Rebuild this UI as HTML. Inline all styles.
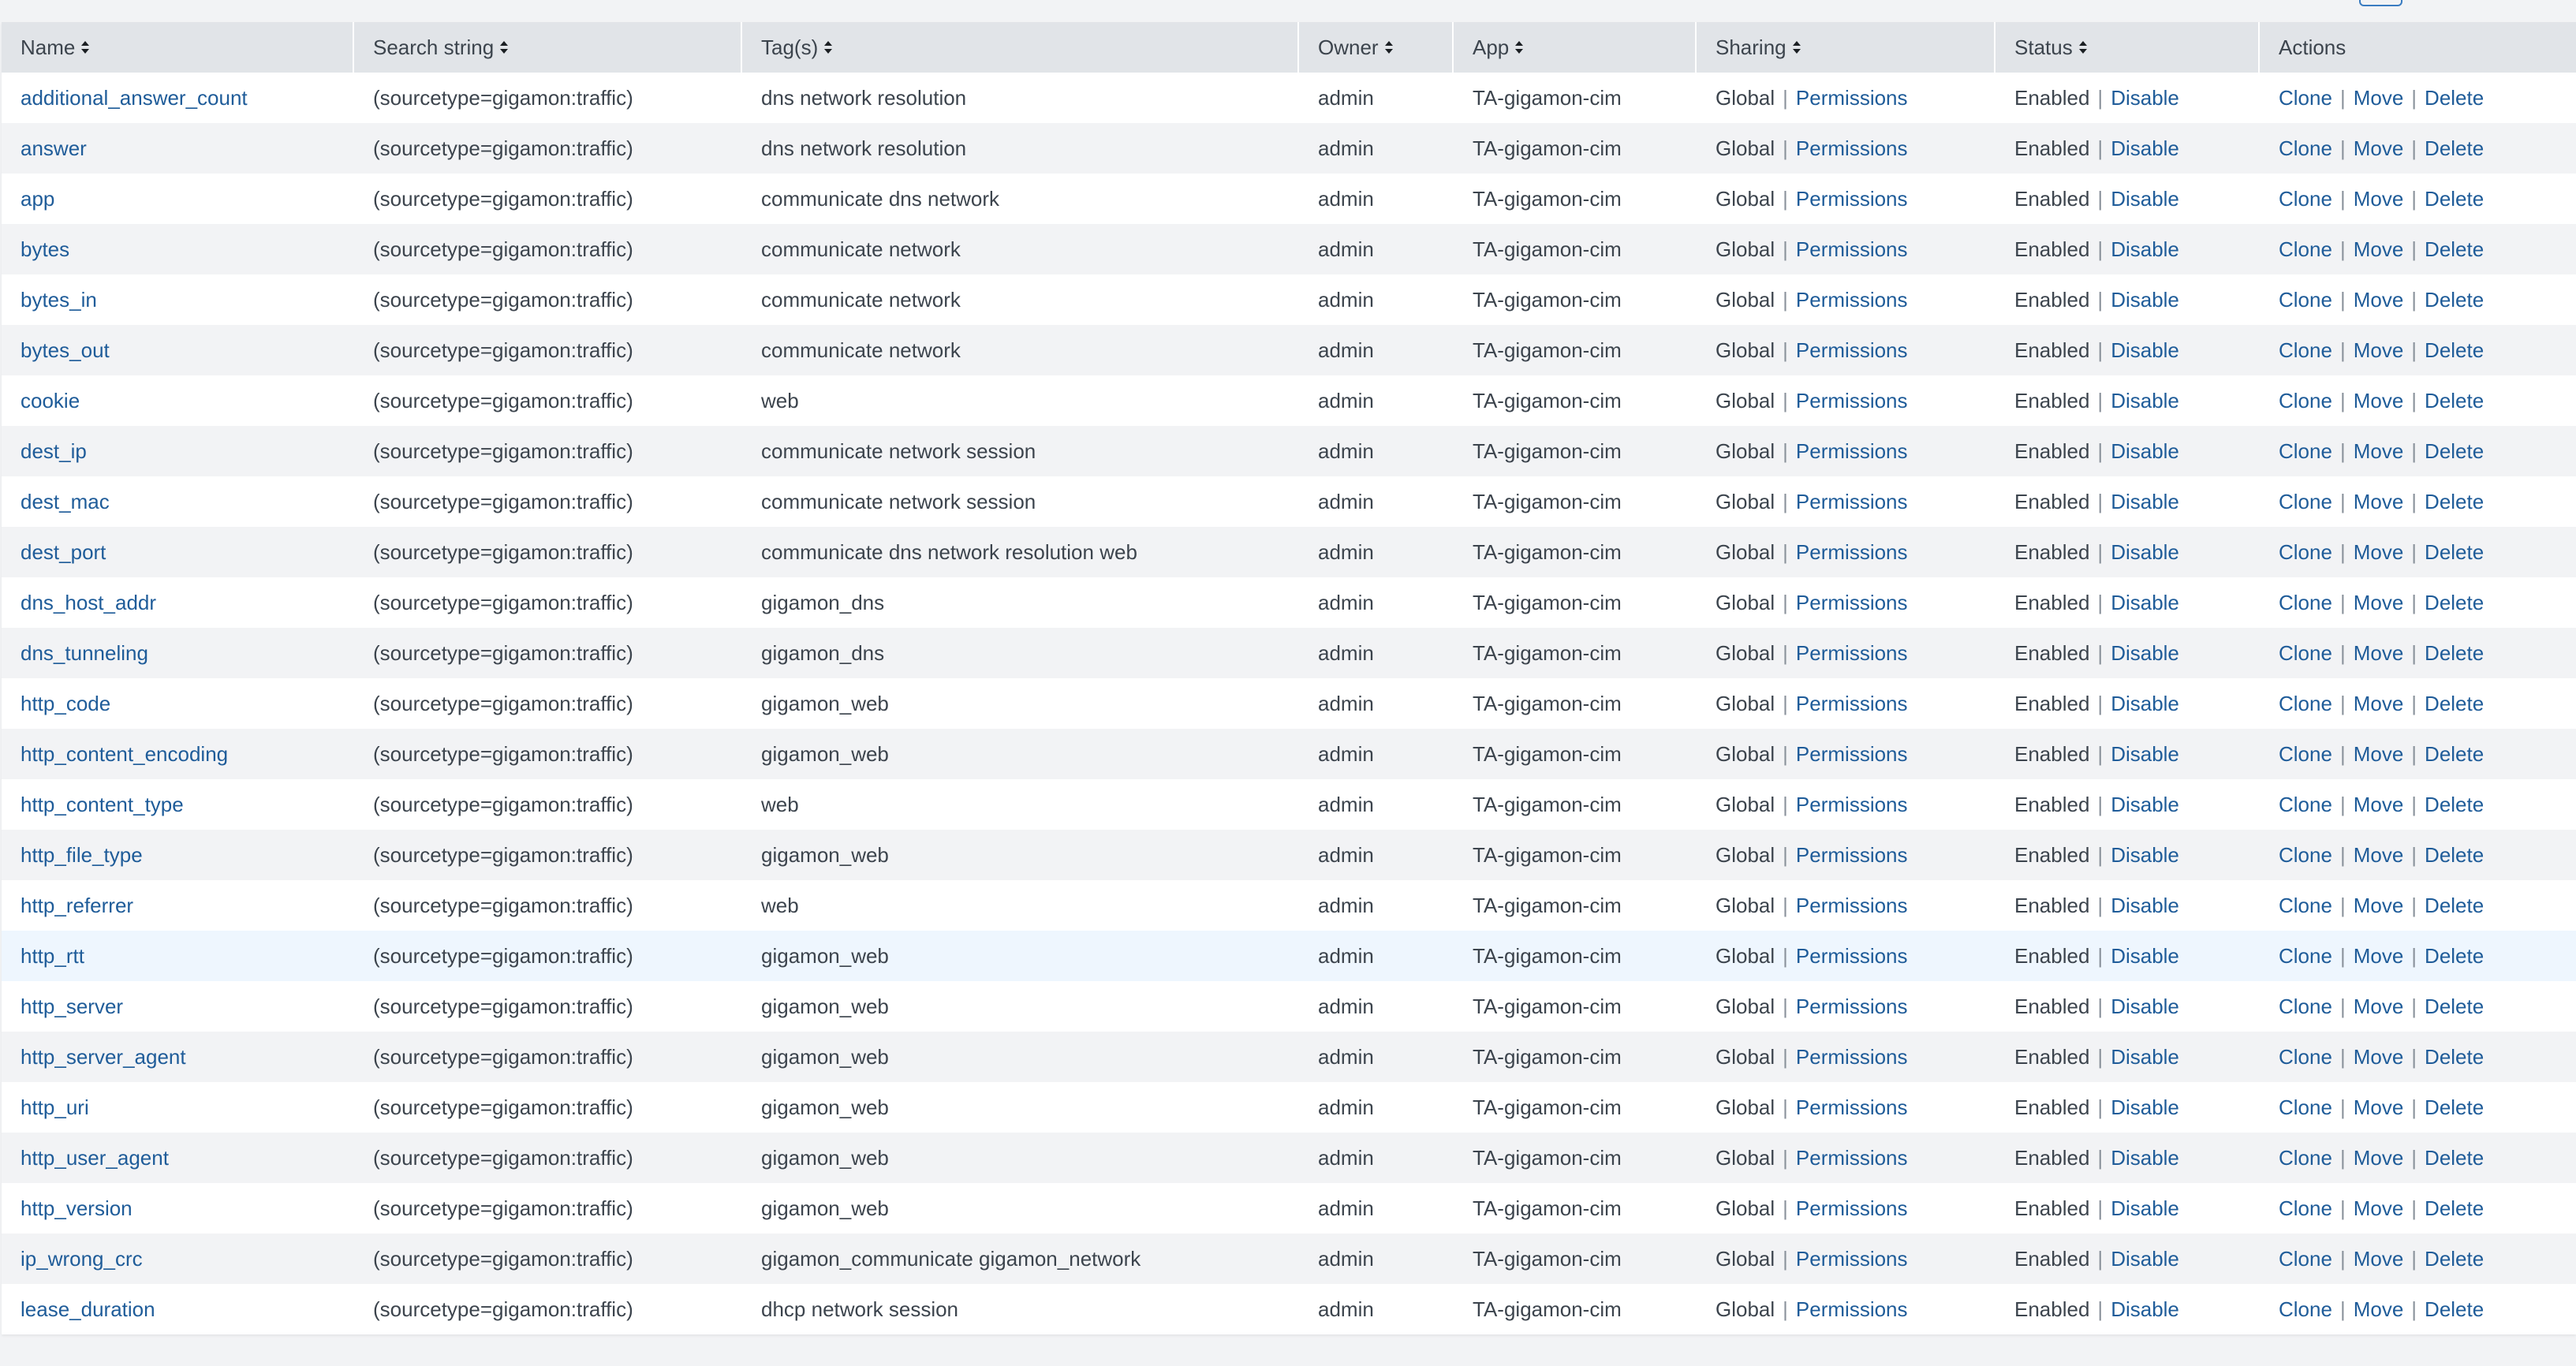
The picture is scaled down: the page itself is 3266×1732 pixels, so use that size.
<!DOCTYPE html>
<html><head><meta charset="utf-8">
<style>
html,body{margin:0;padding:0;}
body{width:3266px;height:1732px;background:#f2f3f5;font-family:"Liberation Sans",sans-serif;font-size:26px;color:#3c444d;position:relative;overflow:hidden;}
.btn{position:absolute;left:2991px;top:-10px;width:51px;height:14px;border:2px solid #3a7cc1;border-radius:6px;}
table{position:absolute;left:2px;top:28px;width:3264px;border-collapse:collapse;table-layout:fixed;box-shadow:0 2px 3px rgba(0,0,0,0.06);}
th{height:64px;background:#e1e4e8;text-align:left;font-weight:normal;padding:0 0 0 24px;border-left:2px solid #fff;white-space:nowrap;}
th:first-child{border-left:none;}
td{height:64px;padding:0 0 0 24px;white-space:nowrap;border-left:2px solid transparent;}
td:first-child{border-left:none;}
tr:nth-child(odd) td{background:#fff;}
tr:nth-child(even) td{background:#f2f3f5;}
tr.hv td{background:#eef6fe !important;}
a{color:#1f5c99;text-decoration:none;}
.s{color:#8a929b;margin:0 10px;}
.srt{display:inline-block;vertical-align:middle;margin-left:8px;width:10px;height:16px;position:relative;top:-2px;}
.srt:before,.srt:after{content:"";position:absolute;left:0;border-left:5px solid transparent;border-right:5px solid transparent;}
.srt:before{top:0;border-bottom:6px solid #1b1f23;}
.srt:after{bottom:0;border-top:6px solid #1b1f23;}
</style></head><body>
<div class="btn"></div>
<table>
<colgroup><col style="width:446px"><col style="width:492px"><col style="width:706px"><col style="width:196px"><col style="width:308px"><col style="width:379px"><col style="width:335px"><col style="width:402px"></colgroup>
<thead><tr><th>Name<span class="srt"></span></th><th>Search string<span class="srt"></span></th><th>Tag(s)<span class="srt"></span></th><th>Owner<span class="srt"></span></th><th>App<span class="srt"></span></th><th>Sharing<span class="srt"></span></th><th>Status<span class="srt"></span></th><th>Actions</th></tr></thead>
<tbody>
<tr><td><a>additional_answer_count</a></td><td>(sourcetype=gigamon:traffic)</td><td>dns network resolution</td><td>admin</td><td>TA-gigamon-cim</td><td>Global<span class="s">|</span><a>Permissions</a></td><td>Enabled<span class="s">|</span><a>Disable</a></td><td><a>Clone</a><span class="s">|</span><a>Move</a><span class="s">|</span><a>Delete</a></td></tr>
<tr><td><a>answer</a></td><td>(sourcetype=gigamon:traffic)</td><td>dns network resolution</td><td>admin</td><td>TA-gigamon-cim</td><td>Global<span class="s">|</span><a>Permissions</a></td><td>Enabled<span class="s">|</span><a>Disable</a></td><td><a>Clone</a><span class="s">|</span><a>Move</a><span class="s">|</span><a>Delete</a></td></tr>
<tr><td><a>app</a></td><td>(sourcetype=gigamon:traffic)</td><td>communicate dns network</td><td>admin</td><td>TA-gigamon-cim</td><td>Global<span class="s">|</span><a>Permissions</a></td><td>Enabled<span class="s">|</span><a>Disable</a></td><td><a>Clone</a><span class="s">|</span><a>Move</a><span class="s">|</span><a>Delete</a></td></tr>
<tr><td><a>bytes</a></td><td>(sourcetype=gigamon:traffic)</td><td>communicate network</td><td>admin</td><td>TA-gigamon-cim</td><td>Global<span class="s">|</span><a>Permissions</a></td><td>Enabled<span class="s">|</span><a>Disable</a></td><td><a>Clone</a><span class="s">|</span><a>Move</a><span class="s">|</span><a>Delete</a></td></tr>
<tr><td><a>bytes_in</a></td><td>(sourcetype=gigamon:traffic)</td><td>communicate network</td><td>admin</td><td>TA-gigamon-cim</td><td>Global<span class="s">|</span><a>Permissions</a></td><td>Enabled<span class="s">|</span><a>Disable</a></td><td><a>Clone</a><span class="s">|</span><a>Move</a><span class="s">|</span><a>Delete</a></td></tr>
<tr><td><a>bytes_out</a></td><td>(sourcetype=gigamon:traffic)</td><td>communicate network</td><td>admin</td><td>TA-gigamon-cim</td><td>Global<span class="s">|</span><a>Permissions</a></td><td>Enabled<span class="s">|</span><a>Disable</a></td><td><a>Clone</a><span class="s">|</span><a>Move</a><span class="s">|</span><a>Delete</a></td></tr>
<tr><td><a>cookie</a></td><td>(sourcetype=gigamon:traffic)</td><td>web</td><td>admin</td><td>TA-gigamon-cim</td><td>Global<span class="s">|</span><a>Permissions</a></td><td>Enabled<span class="s">|</span><a>Disable</a></td><td><a>Clone</a><span class="s">|</span><a>Move</a><span class="s">|</span><a>Delete</a></td></tr>
<tr><td><a>dest_ip</a></td><td>(sourcetype=gigamon:traffic)</td><td>communicate network session</td><td>admin</td><td>TA-gigamon-cim</td><td>Global<span class="s">|</span><a>Permissions</a></td><td>Enabled<span class="s">|</span><a>Disable</a></td><td><a>Clone</a><span class="s">|</span><a>Move</a><span class="s">|</span><a>Delete</a></td></tr>
<tr><td><a>dest_mac</a></td><td>(sourcetype=gigamon:traffic)</td><td>communicate network session</td><td>admin</td><td>TA-gigamon-cim</td><td>Global<span class="s">|</span><a>Permissions</a></td><td>Enabled<span class="s">|</span><a>Disable</a></td><td><a>Clone</a><span class="s">|</span><a>Move</a><span class="s">|</span><a>Delete</a></td></tr>
<tr><td><a>dest_port</a></td><td>(sourcetype=gigamon:traffic)</td><td>communicate dns network resolution web</td><td>admin</td><td>TA-gigamon-cim</td><td>Global<span class="s">|</span><a>Permissions</a></td><td>Enabled<span class="s">|</span><a>Disable</a></td><td><a>Clone</a><span class="s">|</span><a>Move</a><span class="s">|</span><a>Delete</a></td></tr>
<tr><td><a>dns_host_addr</a></td><td>(sourcetype=gigamon:traffic)</td><td>gigamon_dns</td><td>admin</td><td>TA-gigamon-cim</td><td>Global<span class="s">|</span><a>Permissions</a></td><td>Enabled<span class="s">|</span><a>Disable</a></td><td><a>Clone</a><span class="s">|</span><a>Move</a><span class="s">|</span><a>Delete</a></td></tr>
<tr><td><a>dns_tunneling</a></td><td>(sourcetype=gigamon:traffic)</td><td>gigamon_dns</td><td>admin</td><td>TA-gigamon-cim</td><td>Global<span class="s">|</span><a>Permissions</a></td><td>Enabled<span class="s">|</span><a>Disable</a></td><td><a>Clone</a><span class="s">|</span><a>Move</a><span class="s">|</span><a>Delete</a></td></tr>
<tr><td><a>http_code</a></td><td>(sourcetype=gigamon:traffic)</td><td>gigamon_web</td><td>admin</td><td>TA-gigamon-cim</td><td>Global<span class="s">|</span><a>Permissions</a></td><td>Enabled<span class="s">|</span><a>Disable</a></td><td><a>Clone</a><span class="s">|</span><a>Move</a><span class="s">|</span><a>Delete</a></td></tr>
<tr><td><a>http_content_encoding</a></td><td>(sourcetype=gigamon:traffic)</td><td>gigamon_web</td><td>admin</td><td>TA-gigamon-cim</td><td>Global<span class="s">|</span><a>Permissions</a></td><td>Enabled<span class="s">|</span><a>Disable</a></td><td><a>Clone</a><span class="s">|</span><a>Move</a><span class="s">|</span><a>Delete</a></td></tr>
<tr><td><a>http_content_type</a></td><td>(sourcetype=gigamon:traffic)</td><td>web</td><td>admin</td><td>TA-gigamon-cim</td><td>Global<span class="s">|</span><a>Permissions</a></td><td>Enabled<span class="s">|</span><a>Disable</a></td><td><a>Clone</a><span class="s">|</span><a>Move</a><span class="s">|</span><a>Delete</a></td></tr>
<tr><td><a>http_file_type</a></td><td>(sourcetype=gigamon:traffic)</td><td>gigamon_web</td><td>admin</td><td>TA-gigamon-cim</td><td>Global<span class="s">|</span><a>Permissions</a></td><td>Enabled<span class="s">|</span><a>Disable</a></td><td><a>Clone</a><span class="s">|</span><a>Move</a><span class="s">|</span><a>Delete</a></td></tr>
<tr><td><a>http_referrer</a></td><td>(sourcetype=gigamon:traffic)</td><td>web</td><td>admin</td><td>TA-gigamon-cim</td><td>Global<span class="s">|</span><a>Permissions</a></td><td>Enabled<span class="s">|</span><a>Disable</a></td><td><a>Clone</a><span class="s">|</span><a>Move</a><span class="s">|</span><a>Delete</a></td></tr>
<tr class="hv"><td><a>http_rtt</a></td><td>(sourcetype=gigamon:traffic)</td><td>gigamon_web</td><td>admin</td><td>TA-gigamon-cim</td><td>Global<span class="s">|</span><a>Permissions</a></td><td>Enabled<span class="s">|</span><a>Disable</a></td><td><a>Clone</a><span class="s">|</span><a>Move</a><span class="s">|</span><a>Delete</a></td></tr>
<tr><td><a>http_server</a></td><td>(sourcetype=gigamon:traffic)</td><td>gigamon_web</td><td>admin</td><td>TA-gigamon-cim</td><td>Global<span class="s">|</span><a>Permissions</a></td><td>Enabled<span class="s">|</span><a>Disable</a></td><td><a>Clone</a><span class="s">|</span><a>Move</a><span class="s">|</span><a>Delete</a></td></tr>
<tr><td><a>http_server_agent</a></td><td>(sourcetype=gigamon:traffic)</td><td>gigamon_web</td><td>admin</td><td>TA-gigamon-cim</td><td>Global<span class="s">|</span><a>Permissions</a></td><td>Enabled<span class="s">|</span><a>Disable</a></td><td><a>Clone</a><span class="s">|</span><a>Move</a><span class="s">|</span><a>Delete</a></td></tr>
<tr><td><a>http_uri</a></td><td>(sourcetype=gigamon:traffic)</td><td>gigamon_web</td><td>admin</td><td>TA-gigamon-cim</td><td>Global<span class="s">|</span><a>Permissions</a></td><td>Enabled<span class="s">|</span><a>Disable</a></td><td><a>Clone</a><span class="s">|</span><a>Move</a><span class="s">|</span><a>Delete</a></td></tr>
<tr><td><a>http_user_agent</a></td><td>(sourcetype=gigamon:traffic)</td><td>gigamon_web</td><td>admin</td><td>TA-gigamon-cim</td><td>Global<span class="s">|</span><a>Permissions</a></td><td>Enabled<span class="s">|</span><a>Disable</a></td><td><a>Clone</a><span class="s">|</span><a>Move</a><span class="s">|</span><a>Delete</a></td></tr>
<tr><td><a>http_version</a></td><td>(sourcetype=gigamon:traffic)</td><td>gigamon_web</td><td>admin</td><td>TA-gigamon-cim</td><td>Global<span class="s">|</span><a>Permissions</a></td><td>Enabled<span class="s">|</span><a>Disable</a></td><td><a>Clone</a><span class="s">|</span><a>Move</a><span class="s">|</span><a>Delete</a></td></tr>
<tr><td><a>ip_wrong_crc</a></td><td>(sourcetype=gigamon:traffic)</td><td>gigamon_communicate gigamon_network</td><td>admin</td><td>TA-gigamon-cim</td><td>Global<span class="s">|</span><a>Permissions</a></td><td>Enabled<span class="s">|</span><a>Disable</a></td><td><a>Clone</a><span class="s">|</span><a>Move</a><span class="s">|</span><a>Delete</a></td></tr>
<tr><td><a>lease_duration</a></td><td>(sourcetype=gigamon:traffic)</td><td>dhcp network session</td><td>admin</td><td>TA-gigamon-cim</td><td>Global<span class="s">|</span><a>Permissions</a></td><td>Enabled<span class="s">|</span><a>Disable</a></td><td><a>Clone</a><span class="s">|</span><a>Move</a><span class="s">|</span><a>Delete</a></td></tr>
</tbody></table>
</body></html>
